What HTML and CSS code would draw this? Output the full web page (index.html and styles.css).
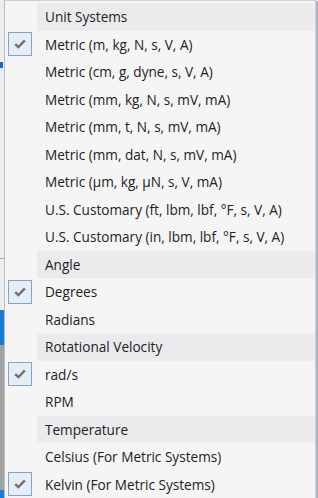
FILE: index.html
```html
<!DOCTYPE html>
<html>
<head>
<meta charset="utf-8">
<link rel="stylesheet" href="styles.css">
</head>
<body>
<div class="screen">
  <div class="app-edge">
    <div class="edge-arrow"></div>
    <div class="edge-line"></div>
    <div class="edge-blue"></div>
    <div class="edge-gray"></div>
    <div class="edge-blue2"></div>
  </div>
  <div class="menu">
    <div class="row header"><span class="label">Unit Systems</span></div>
    <div class="row checked"><span class="icon"><span class="box"><svg viewBox="0 0 12 10" width="12" height="10"><path d="M1.2 5.2 L4.4 8.2 L10.8 1.4" fill="none" stroke="#6e6e6e" stroke-width="2.3"/></svg></span></span><span class="label">Metric (m, kg, N, s, V, A)</span></div>
    <div class="row"><span class="icon"></span><span class="label">Metric (cm, g, dyne, s, V, A)</span></div>
    <div class="row"><span class="icon"></span><span class="label">Metric (mm, kg, N, s, mV, mA)</span></div>
    <div class="row"><span class="icon"></span><span class="label">Metric (mm, t, N, s, mV, mA)</span></div>
    <div class="row"><span class="icon"></span><span class="label">Metric (mm, dat, N, s, mV, mA)</span></div>
    <div class="row"><span class="icon"></span><span class="label">Metric (μm, kg, μN, s, V, mA)</span></div>
    <div class="row"><span class="icon"></span><span class="label">U.S. Customary (ft, lbm, lbf, °F, s, V, A)</span></div>
    <div class="row"><span class="icon"></span><span class="label">U.S. Customary (in, lbm, lbf, °F, s, V, A)</span></div>
    <div class="row header"><span class="label">Angle</span></div>
    <div class="row checked"><span class="icon"><span class="box"><svg viewBox="0 0 12 10" width="12" height="10"><path d="M1.2 5.2 L4.4 8.2 L10.8 1.4" fill="none" stroke="#6e6e6e" stroke-width="2.3"/></svg></span></span><span class="label">Degrees</span></div>
    <div class="row"><span class="icon"></span><span class="label">Radians</span></div>
    <div class="row header"><span class="label">Rotational Velocity</span></div>
    <div class="row checked"><span class="icon"><span class="box"><svg viewBox="0 0 12 10" width="12" height="10"><path d="M1.2 5.2 L4.4 8.2 L10.8 1.4" fill="none" stroke="#6e6e6e" stroke-width="2.3"/></svg></span></span><span class="label">rad/s</span></div>
    <div class="row"><span class="icon"></span><span class="label">RPM</span></div>
    <div class="row header"><span class="label">Temperature</span></div>
    <div class="row"><span class="icon"></span><span class="label">Celsius (For Metric Systems)</span></div>
    <div class="row checked"><span class="icon"><span class="box"><svg viewBox="0 0 12 10" width="12" height="10"><path d="M1.2 5.2 L4.4 8.2 L10.8 1.4" fill="none" stroke="#6e6e6e" stroke-width="2.3"/></svg></span></span><span class="label">Kelvin (For Metric Systems)</span></div>
  </div>
</div>
</body>
</html>
```

FILE: styles.css
```css
html, body {
  margin: 0;
  padding: 0;
}
body {
  width: 318px;
  height: 498px;
  overflow: hidden;
  background: #f5f5f5;
  font-family: "Open Sans", "Noto Sans", sans-serif;
  font-size: 13.6px;
  color: #222222;
}
.screen {
  display: flex;
  width: 318px;
  height: 498px;
}
.app-edge {
  width: 4px;
  flex: none;
  background: #eceef2;
  border-right: 1px solid #b9bcc2;
  display: flex;
  flex-direction: column;
}
.edge-arrow {
  height: 6px;
  margin-top: 62px;
  width: 3px;
  background: #2a5fb8;
}
.edge-line {
  height: 1px;
  margin-top: 190px;
  background: #a9acb2;
}
.edge-blue {
  height: 35px;
  margin-top: 51px;
  background: #1b79cf;
}
.edge-gray {
  height: 145px;
  background: #a3a3a3;
}
.edge-blue2 {
  flex: 1;
  background: #1b79cf;
}
.menu {
  flex: 1;
  background: #f5f5f5;
  border-top: 1px solid #d0d0d0;
  border-right: 1px solid #c9ced6;
  padding-top: 2px;
  margin-right: 2px;
  display: flex;
  flex-direction: column;
  position: relative;
}
.menu::after {
  content: "";
  position: absolute;
  top: 0;
  right: -3px;
  width: 2px;
  height: 100%;
  background: #aeb5c1;
}
.row {
  height: 27.5px;
  flex: none;
  display: flex;
  align-items: center;
}
.header {
  margin-left: 32px;
  margin-right: 1px;
  background: #ebebee;
}
.icon {
  width: 32px;
  flex: none;
  display: flex;
  align-items: center;
  justify-content: center;
}
.box {
  width: 22px;
  height: 22px;
  margin-left: -2px;
  border: 1px solid #7fa6c9;
  background: #e6edf5;
  display: flex;
  align-items: center;
  justify-content: center;
}
.label {
  padding-left: 8px;
  white-space: nowrap;
}
```
